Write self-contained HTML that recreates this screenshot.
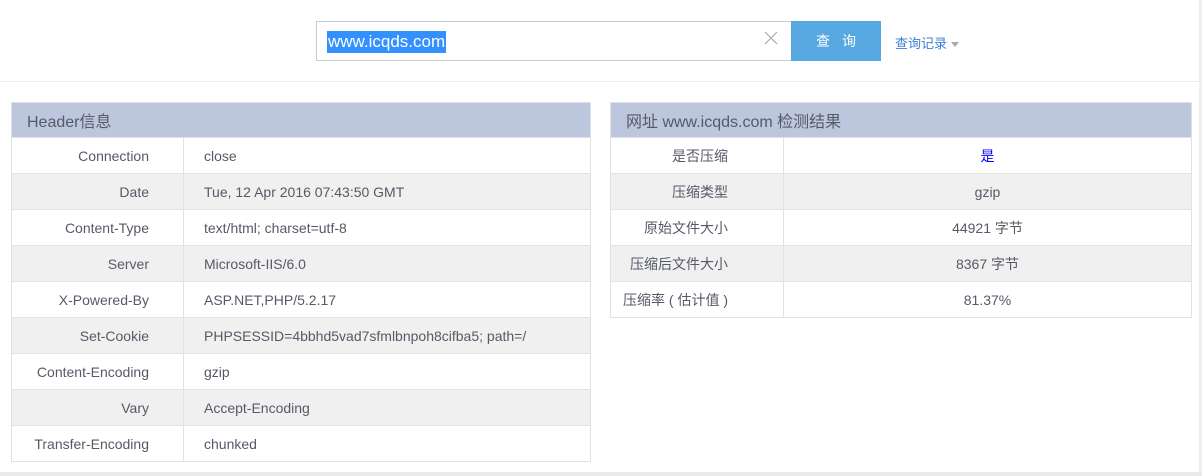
<!DOCTYPE html>
<html><head><meta charset="utf-8"><style>
*{margin:0;padding:0;box-sizing:border-box}
body{width:1202px;height:476px;background:#fff;font-family:"Liberation Sans","Noto Sans CJK SC",sans-serif;font-size:14px;color:#555a66;position:relative;overflow:hidden}
.top{position:absolute;left:0;top:0;width:1202px;height:82px;border-bottom:1px solid #ececec}
.inp{position:absolute;left:316px;top:21px;width:476px;height:40px;border:1px solid #c5ccd8;background:#fff}
.sel{position:absolute;left:10px;top:9px;background:#3390ff;color:#fff;font-size:17px;line-height:22px;padding:0 1px}
.x{position:absolute;left:446px;top:8px;width:16px;height:16px}
.btn{position:absolute;left:791px;top:21px;width:90px;height:40px;background:#57a7e0;color:#fff;font-size:14px;text-align:center;line-height:40px;letter-spacing:12px;padding-left:12px}
.lnk{position:absolute;left:895px;top:33px;color:#3a7fd5;font-size:13px}
.lnk:after{content:"";display:inline-block;margin-left:4px;vertical-align:middle;border:4px solid transparent;border-top:5px solid #aaa;border-bottom:0}
table{position:absolute;border-collapse:collapse;table-layout:fixed}
th{background:#bcc6dd;height:35px;text-align:left;font-weight:normal;font-size:16px;padding-left:15px;color:#555a66;border:1px solid #dde1e8}
td{height:36px;border:1px solid #e2e2e2;padding:0 20px;font-size:14px;white-space:nowrap}
tr:nth-child(odd) td{background:#f0f0f0}
.k{text-align:right;padding-left:0;padding-right:34px}
#t1{left:11px;top:102px;width:580px}
#t2{left:610px;top:102px;width:582px}
#t2 .k{padding-right:55px}
#t2 td.v{text-align:center}
.r{position:absolute;right:0;top:0;width:3px;height:476px;background:#eee}
.b{position:absolute;left:0;bottom:0;width:1202px;height:4px;background:#e9e9e9}
</style></head><body>
<div class="top">
<div class="inp"><span class="sel">www.icqds.com</span><svg class="x" viewBox="0 0 16 16"><path d="M2 2L14 14M14 2L2 14" stroke="#aaa" stroke-width="1.2"/></svg></div>
<div class="btn">查询</div>
<div class="lnk">查询记录</div>
</div>
<table id="t1"><colgroup><col style="width:172px"><col></colgroup>
<tr><th colspan="2">Header信息</th></tr>
<tr><td class="k">Connection</td><td>close</td></tr>
<tr><td class="k">Date</td><td>Tue, 12 Apr 2016 07:43:50 GMT</td></tr>
<tr><td class="k">Content-Type</td><td>text/html; charset=utf-8</td></tr>
<tr><td class="k">Server</td><td>Microsoft-IIS/6.0</td></tr>
<tr><td class="k">X-Powered-By</td><td>ASP.NET,PHP/5.2.17</td></tr>
<tr><td class="k">Set-Cookie</td><td>PHPSESSID=4bbhd5vad7sfmlbnpoh8cifba5; path=/</td></tr>
<tr><td class="k">Content-Encoding</td><td>gzip</td></tr>
<tr><td class="k">Vary</td><td>Accept-Encoding</td></tr>
<tr><td class="k">Transfer-Encoding</td><td>chunked</td></tr>
</table>
<table id="t2"><colgroup><col style="width:173px"><col></colgroup>
<tr><th colspan="2">网址 www.icqds.com 检测结果</th></tr>
<tr><td class="k">是否压缩</td><td class="v" style="color:#00f">是</td></tr>
<tr><td class="k">压缩类型</td><td class="v">gzip</td></tr>
<tr><td class="k">原始文件大小</td><td class="v">44921 字节</td></tr>
<tr><td class="k">压缩后文件大小</td><td class="v">8367 字节</td></tr>
<tr><td class="k">压缩率 ( 估计值 )</td><td class="v">81.37%</td></tr>
</table>
<div class="r"></div><div class="b"></div>
</body></html>
